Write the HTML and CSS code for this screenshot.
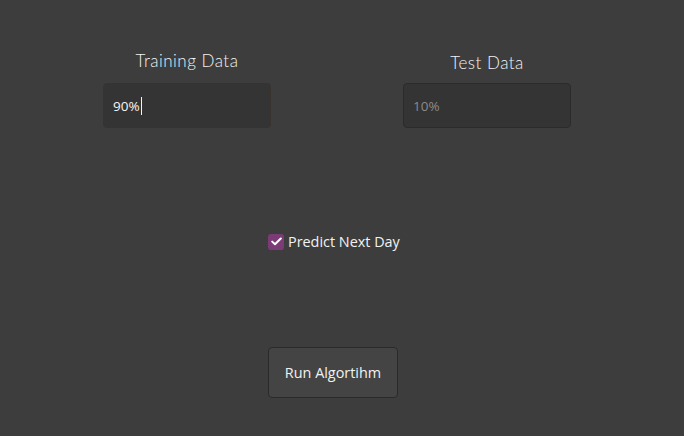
FILE: index.html
```html
<!DOCTYPE html>
<html>
<head>
<meta charset="utf-8">
<link rel="stylesheet" href="styles.css">
</head>
<body>
<div class="app">
  <div class="fields">
    <div class="field">
      <div class="label">Training Data</div>
      <div class="input focus"><span class="value">90%</span><span class="caret"></span></div>
    </div>
    <div class="field">
      <div class="label test">Test Data</div>
      <div class="input"><span class="placeholder">10%</span></div>
    </div>
  </div>
  <div class="check-row">
    <span class="checkbox"><svg width="11" height="9" viewBox="0 0 11 9"><path d="M1.2 4.6 L4 7.3 L9.8 1.5" fill="none" stroke="#fff" stroke-width="2" stroke-linecap="round" stroke-linejoin="round"/></svg></span>
    <span class="check-label">Predict Next Day</span>
  </div>
  <div class="button-row">
    <div class="button">Run Algortihm</div>
  </div>
</div>
</body>
</html>
```
FILE: styles.css
```css
html, body {
  margin: 0;
  padding: 0;
  background: #3d3d3d;
  width: 684px;
  height: 436px;
  overflow: hidden;
  font-family: "Open Sans", "Noto Sans", sans-serif;
}
.app {
  display: flex;
  flex-direction: column;
  padding-top: 50px;
}
.fields {
  display: flex;
  padding-left: 103px;
  gap: 132px;
}
.field {
  display: flex;
  flex-direction: column;
  align-items: center;
  width: 168px;
}
.label {
  font-family: "Lato", sans-serif;
  font-weight: 300;
  font-size: 17px;
  color: #f2f2f2;
  height: 22px;
  line-height: 22px;
  margin-bottom: 11px;
  letter-spacing: 0.5px;
}
.label.test {
  margin-top: 2px;
  margin-bottom: 9px;
}
.input {
  box-sizing: border-box;
  width: 168px;
  height: 45px;
  background: #343434;
  border: 1px solid #2b2b2b;
  border-radius: 4px;
  display: flex;
  align-items: center;
  padding-left: 9px;
  font-size: 13.5px;
}
.input.focus {
  border-color: #3a322d;
}
.value { color: #f4f4f4; }
.caret {
  display: inline-block;
  width: 1px;
  height: 18px;
  background: #f4f4f4;
  margin-left: 1px;
}
.placeholder { color: #8a8a8a; }
.check-row {
  display: flex;
  align-items: center;
  padding-left: 268px;
  margin-top: 104px;
}
.checkbox {
  width: 16px;
  height: 16px;
  border-radius: 3px;
  background: #7b3b77;
  display: flex;
  align-items: center;
  justify-content: center;
}
.check-label {
  margin-left: 4px;
  font-size: 14.4px;
  color: #f2f2f2;
}
.button-row {
  display: flex;
  padding-left: 268px;
  margin-top: 96px;
}
.button {
  box-sizing: border-box;
  width: 130px;
  height: 51px;
  background: #444444;
  border: 1px solid #2a2a2a;
  border-radius: 4px;
  display: flex;
  align-items: center;
  justify-content: center;
  font-size: 14.4px;
  color: #f2f2f2;
}
```
